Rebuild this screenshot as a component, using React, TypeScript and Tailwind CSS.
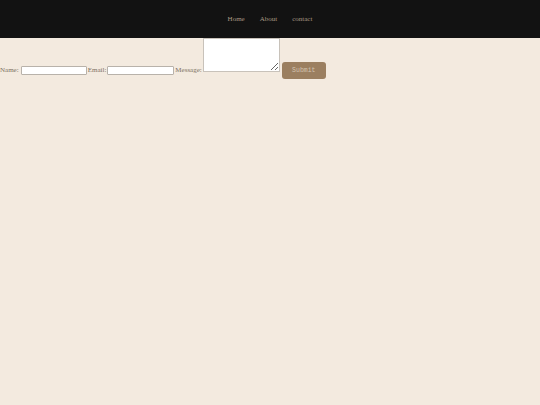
import React from 'react';

const serif = { fontFamily: '"Liberation Serif", "DejaVu Serif", serif' };
const mono = { fontFamily: '"Liberation Mono", "DejaVu Sans Mono", monospace' };

export default function App() {
  return (
    <div className="min-h-[405px] bg-[#f3eadf]" style={serif}>
      <nav className="h-[38px] bg-[#121212] flex items-center justify-center gap-[15px] text-[7px] text-[#a89883]">
        <a href="#">Home</a>
        <a href="#">About</a>
        <a href="#">contact</a>
      </nav>

      <form className="flex items-start text-[7px] text-[#7d7163]">
        <label className="mt-[28px] leading-[9px]">Name:</label>
        <input
          type="text"
          className="mt-[28px] ml-[2px] w-[66px] h-[9px] bg-white border border-[#b8b2aa] rounded-[1px]"
        />
        <label className="mt-[28px] ml-[1px] leading-[9px]">Email:</label>
        <input
          type="email"
          className="mt-[28px] ml-[1px] w-[67px] h-[9px] bg-white border border-[#b8b2aa] rounded-[1px]"
        />
        <label className="mt-[28px] ml-[1px] leading-[9px]">Message:</label>
        <textarea className="ml-[1px] w-[77px] h-[34px] bg-white border border-[#c8c2ba] resize" />
        <button
          type="button"
          className="mt-[24px] ml-[2px] w-[44px] h-[17px] rounded-[3px] bg-[#9b7f60] text-[#d3c4b0] text-[6.5px]"
          style={mono}
        >
          Submit
        </button>
      </form>
    </div>
  );
}
